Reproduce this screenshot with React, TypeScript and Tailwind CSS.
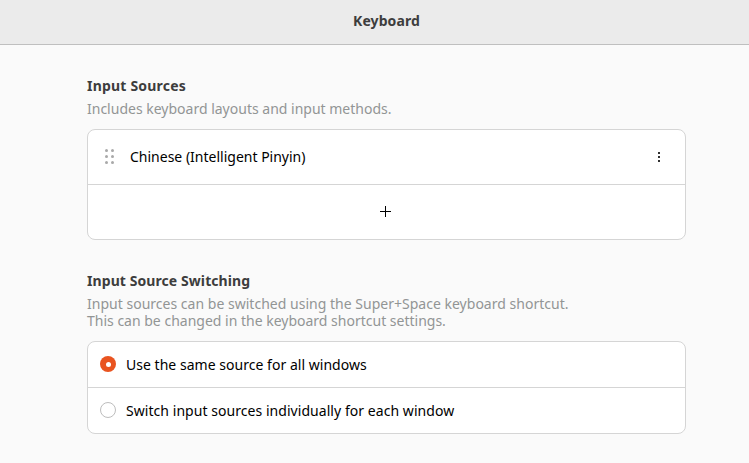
import type { ReactNode } from "react";

function Section({ title, children }: { title: ReactNode; children: ReactNode }) {
  return (
    <section className="w-[599px]">
      {title}
      {children}
    </section>
  );
}

function DragHandle() {
  return (
    <svg width="10" height="16" viewBox="0 0 10 16" fill="#a9a9a9" aria-hidden="true">
      {[1.5, 7.5, 13.5].map((y) => (
        <g key={y}>
          <circle cx="1.5" cy={y} r="1.5" />
          <circle cx="7.5" cy={y} r="1.5" />
        </g>
      ))}
    </svg>
  );
}

function Radio({ checked }: { checked: boolean }) {
  return checked ? (
    <span className="mb-px flex size-4 items-center justify-center rounded-full bg-[#e95420]">
      <span className="size-[5px] rounded-full bg-white" />
    </span>
  ) : (
    <span className="mb-px size-4 rounded-full border border-[#bdbdbd] bg-white" />
  );
}

export default function App() {
  return (
    <main className="h-[463px] w-[749px] overflow-hidden bg-[#fafafa] font-['Noto_Sans','Open_Sans',sans-serif] text-[14px] leading-[17px] whitespace-nowrap text-black">
      <header className="flex h-[45px] justify-center border-b border-[#bfbfbf] bg-[#ebebeb] pt-3 pl-6">
        <h1 className="font-bold tracking-[0.1px] text-[#3d3d3d]">Keyboard</h1>
      </header>

      <div className="flex flex-col gap-8 pt-8 pl-[87px]">
        <Section title={<h2 className="font-bold tracking-[0.2px] text-[#3d3d3d]">Input Sources</h2>}>
          <p className="mt-[6px] text-[#929595]">Includes keyboard layouts and input methods.</p>
          <div className="mt-3 rounded-lg border border-[#d5d5d5] bg-white">
            <div className="flex h-[55px] items-center border-b border-[#d5d5d5] pr-[25px] pl-[17px]">
              <DragHandle />
              <span className="ml-[15px] flex-1 pb-[2px]">Chinese (Intelligent Pinyin)</span>
              <svg width="2" height="10" viewBox="0 0 2 10" fill="#303030" aria-label="More options">
                <path d="M0 0h2v2H0zM0 4h2v2H0zM0 8h2v2H0z" />
              </svg>
            </div>
            <div className="flex h-[54px] items-center justify-center pr-[2px] pb-[2px]">
              <svg width="11" height="11" viewBox="0 0 11 11" fill="#000" aria-label="Add input source">
                <path d="M5 0h1v5h5v1H6v5H5V6H0V5h5z" />
              </svg>
            </div>
          </div>
        </Section>

        <Section title={<h2 className="font-bold tracking-[0.08px] text-[#3d3d3d]">Input Source Switching</h2>}>
          <div className="mt-[6px] text-[#929595]">
            <p className="tracking-[0.015px]">Input sources can be switched using the Super+Space keyboard shortcut.</p>
            <p>This can be changed in the keyboard shortcut settings.</p>
          </div>
          <div className="mt-3 rounded-lg border border-[#d5d5d5] bg-white">
            <label className="flex h-[46px] items-center gap-[10px] border-b border-[#d5d5d5] pl-3">
              <Radio checked />
              <span className="tracking-[0.03px]">Use the same source for all windows</span>
            </label>
            <label className="flex h-[45px] items-center gap-[10px] pl-3">
              <Radio checked={false} />
              <span className="tracking-[0.05px]">Switch input sources individually for each window</span>
            </label>
          </div>
        </Section>
      </div>
    </main>
  );
}
